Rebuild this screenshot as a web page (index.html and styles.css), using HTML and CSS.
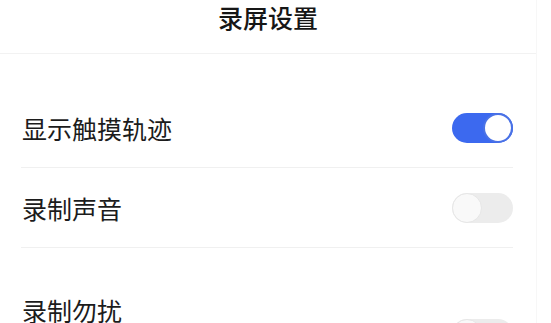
FILE: index.html
```html
<!DOCTYPE html>
<html lang="zh-CN">
<head>
<meta charset="utf-8">
<title>录屏设置</title>
<link rel="stylesheet" href="styles.css">
</head>
<body>
<div class="page">
  <header class="header">
    <h1 class="title">录屏设置</h1>
  </header>
  <section class="group first">
    <div class="row">
      <span class="label">显示触摸轨迹</span>
      <span class="switch on"><span class="knob"></span></span>
    </div>
    <div class="row">
      <span class="label">录制声音</span>
      <span class="switch"><span class="knob"></span></span>
    </div>
  </section>
  <section class="group">
    <div class="row tall">
      <span class="label">录制勿扰</span>
      <span class="switch"><span class="knob"></span></span>
    </div>
  </section>
</div>
</body>
</html>
```

FILE: styles.css
```css
html, body {
  margin: 0;
  padding: 0;
  background: #ffffff;
}
body {
  font-family: "Noto Sans CJK SC", "Noto Sans", sans-serif;
  color: #1c1c1c;
  overflow: hidden;
}
.page {
  width: 536px;
  height: 323px;
  border-right: 1px solid #f7f7f7;
  background: #ffffff;
  overflow: hidden;
}
.header {
  height: 53px;
  border-bottom: 1px solid #f2f2f2;
  display: flex;
  justify-content: center;
}
.title {
  margin: 0;
  font-size: 25px;
  font-weight: 500;
  line-height: 34px;
  color: #161616;
}
.group {
  margin: 0 23px 0 21px;
}
.group.first {
  margin-top: 34px;
}
.row {
  height: 79px;
  border-bottom: 1px solid #f0f0f0;
  display: flex;
  align-items: center;
  justify-content: space-between;
  padding-left: 1px;
}
.row.tall {
  height: auto;
  border-bottom: none;
  align-items: flex-start;
  padding-top: 45px;
}
.row.tall .switch {
  margin-top: 26px;
}
.label {
  font-size: 25px;
  line-height: 34px;
}
.switch {
  position: relative;
  width: 61px;
  height: 30px;
  border-radius: 15px;
  background: #ececec;
  box-sizing: border-box;
}
.switch .knob {
  position: absolute;
  top: 0;
  left: 0;
  width: 30px;
  height: 30px;
  border-radius: 50%;
  background: #f9f9f9;
  border: 1px solid #e6e6e6;
  box-sizing: border-box;
}
.switch.on {
  background: #3c69ef;
}
.switch.on .knob {
  left: auto;
  right: 0;
  background: #ffffff;
  border: 2px solid #4a72e6;
}
```
